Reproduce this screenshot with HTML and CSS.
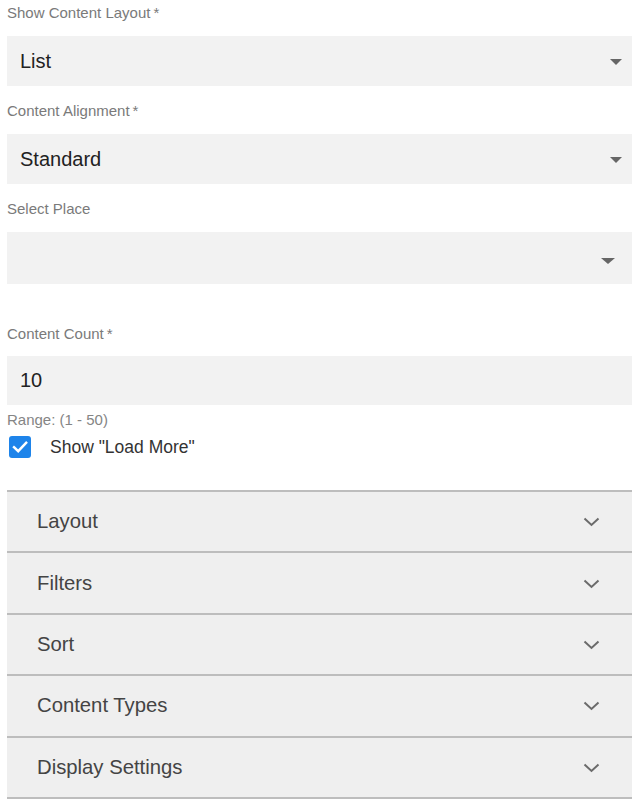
FILE: index.html
```html
<!DOCTYPE html>
<html lang="en">
<head>
<meta charset="utf-8">
<title>Content Settings</title>
<link rel="stylesheet" href="styles.css">
</head>
<body>
<div class="page">
  <div class="label first">Show Content Layout<span class="req">*</span></div>
  <div class="select">
    <span class="value">List</span>
    <span class="caret"></span>
  </div>

  <div class="label">Content Alignment<span class="req">*</span></div>
  <div class="select">
    <span class="value">Standard</span>
    <span class="caret"></span>
  </div>

  <div class="label">Select Place</div>
  <div class="select place">
    <span class="value"></span>
    <span class="caret"></span>
  </div>

  <div class="label count">Content Count<span class="req">*</span></div>
  <div class="select input">
    <span class="value">10</span>
  </div>
  <div class="hint">Range: (1 - 50)</div>
  <label class="check-row">
    <span class="checkbox">
      <svg width="22" height="22" viewBox="0 0 22 22"><path d="M5 11.2 L9.2 15.2 L17.2 6.8" fill="none" stroke="#fff" stroke-width="2.4" stroke-linecap="square"/></svg>
    </span>
    <span class="check-text">Show "Load More"</span>
  </label>

  <div class="accordion">
    <div class="acc-item"><span>Layout</span><svg class="chev" width="17" height="10" viewBox="0 0 17 10"><polyline points="1.5,1.5 8.5,8 15.5,1.5" fill="none" stroke="#6b6b6b" stroke-width="2"/></svg></div>
    <div class="acc-item"><span>Filters</span><svg class="chev" width="17" height="10" viewBox="0 0 17 10"><polyline points="1.5,1.5 8.5,8 15.5,1.5" fill="none" stroke="#6b6b6b" stroke-width="2"/></svg></div>
    <div class="acc-item"><span>Sort</span><svg class="chev" width="17" height="10" viewBox="0 0 17 10"><polyline points="1.5,1.5 8.5,8 15.5,1.5" fill="none" stroke="#6b6b6b" stroke-width="2"/></svg></div>
    <div class="acc-item"><span>Content Types</span><svg class="chev" width="17" height="10" viewBox="0 0 17 10"><polyline points="1.5,1.5 8.5,8 15.5,1.5" fill="none" stroke="#6b6b6b" stroke-width="2"/></svg></div>
    <div class="acc-item last"><span>Display Settings</span><svg class="chev" width="17" height="10" viewBox="0 0 17 10"><polyline points="1.5,1.5 8.5,8 15.5,1.5" fill="none" stroke="#6b6b6b" stroke-width="2"/></svg></div>
  </div>
</div>
</body>
</html>
```

FILE: styles.css
```css
html, body {
  margin: 0;
  padding: 0;
  background: #ffffff;
}

body {
  font-family: "Liberation Sans", Arial, sans-serif;
}

.page {
  padding: 0 6px 0 7px;
}

.label {
  font-size: 15px;
  line-height: 18px;
  height: 18px;
  color: #7a7a7a;
  margin-bottom: 14px;
}

.label.first {
  padding-top: 4px;
}

.label.count {
  margin-bottom: 13px;
}

.req {
  margin-left: 3px;
}

.select {
  height: 50px;
  background: #f2f2f2;
  display: flex;
  align-items: center;
  justify-content: space-between;
  padding: 0 10px 0 13px;
  margin-bottom: 16px;
  box-sizing: border-box;
}

.select .value {
  font-size: 20px;
  color: #222222;
}

.caret {
  width: 0;
  height: 0;
  border-left: 6px solid transparent;
  border-right: 6px solid transparent;
  border-top: 6px solid #666666;
  margin-top: 1px;
}

.select.place {
  height: 52px;
  margin-bottom: 41px;
  padding-right: 17px;
}

.select.place .caret {
  margin-top: 5px;
  border-left-width: 7px;
  border-right-width: 7px;
}

.select.input {
  height: 49px;
  margin-bottom: 0;
}

.hint {
  font-size: 15px;
  line-height: 16px;
  color: #858585;
  margin-top: 7px;
}

.check-row {
  display: flex;
  align-items: center;
  height: 22px;
  margin-top: 8px;
  padding-left: 2px;
}

.checkbox {
  width: 22px;
  height: 22px;
  border-radius: 3px;
  background: #1e84ea;
  display: flex;
}

.check-text {
  font-size: 17.5px;
  color: #333333;
  margin-left: 19px;
}

.accordion {
  margin-top: 32px;
}

.acc-item {
  height: 59.4px;
  border-top: 2px solid #bdbdbd;
  background: #efefef;
  display: flex;
  align-items: center;
  justify-content: space-between;
  padding: 0 32px 0 30px;
  font-size: 20.3px;
  color: #444444;
}

.acc-item.last {
  border-bottom: 2px solid #bdbdbd;
}

.chev {
  display: block;
  margin-top: 1px;
}
```
